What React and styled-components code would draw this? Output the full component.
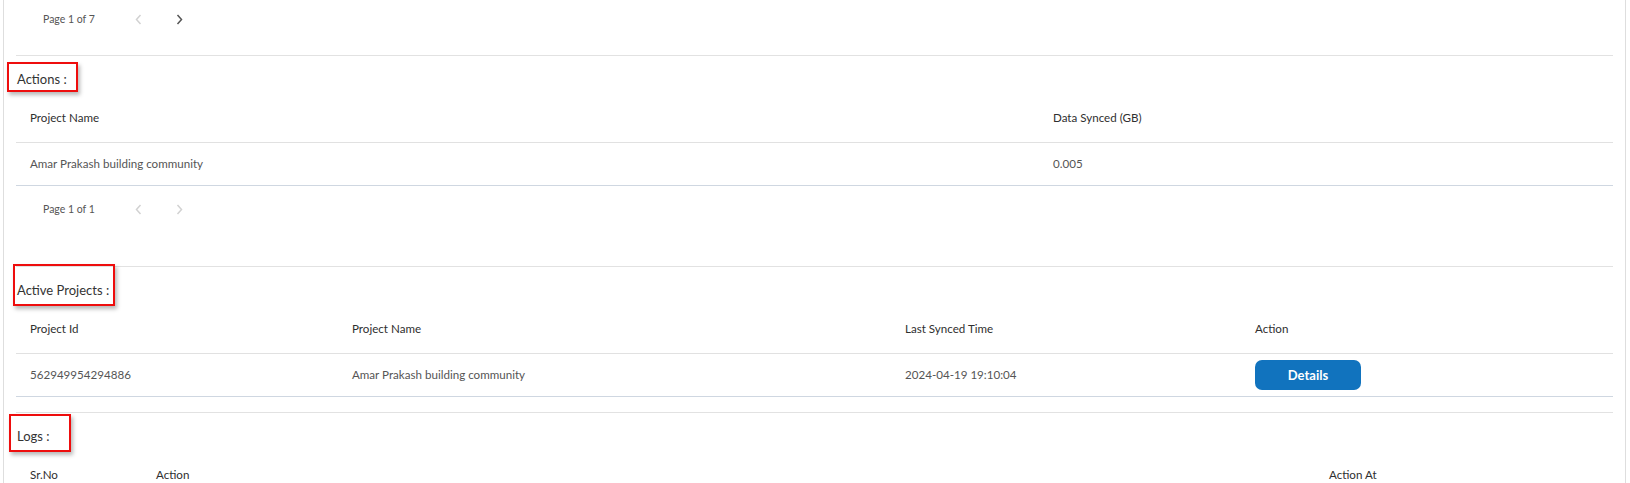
import React from 'react'
import styled, { createGlobalStyle } from 'styled-components'

const GlobalStyle = createGlobalStyle`
  body {
    margin: 0;
    background: #ffffff;
    font-family: Lato, "Liberation Sans", sans-serif;
  }
`

const Page = styled.div`
  width: 1630px;
  height: 483px;
  overflow: hidden;
  background: #fff;
`

const Panel = styled.div`
  margin-left: 3px;
  width: 1597px;
  padding: 0 12px;
  border-left: 1px solid #dedede;
  border-right: 1px solid #dedede;
  min-height: 483px;
`

const Pager = styled.div`
  display: flex;
  align-items: center;
  height: 18px;
  padding: ${p => p.$top}px 0 ${p => p.$bottom}px 27px;
`

const PageText = styled.span`
  width: 85px;
  font-size: 10.5px;
  color: #555;
`

const NavBtn = styled.span`
  width: 20px;
  height: 18px;
  display: flex;
  align-items: center;
  justify-content: center;
  margin-right: 21px;
  color: ${p => (p.$enabled ? '#555' : '#d2d2d2')};
`

const Section = styled.section`
  border-top: 1px solid #e2e2e2;
  padding-bottom: ${p => p.$bottom || 0}px;
`

const Heading = styled.div`
  position: relative;
  padding: 13px 0 7px 1px;
  line-height: 20px;
  font-size: 13px;
  color: #333;
`

const Mark = styled.span`
  position: absolute;
  left: ${p => p.$left}px;
  top: ${p => p.$top}px;
  width: ${p => p.$w}px;
  height: ${p => p.$h}px;
  box-sizing: border-box;
  border: 2px solid #ee0d0d;
  box-shadow: 2px 3px 4px rgba(0, 0, 0, 0.28);
  pointer-events: none;
`

const Row = styled.div`
  display: grid;
  grid-template-columns: ${p => p.$cols};
  align-items: center;
  border-bottom: 1px solid ${p => (p.$head ? '#e1e1e1' : '#cfd7e1')};
`

const HeadCell = styled.div`
  padding: 13px 14px 15px;
  line-height: 18px;
  font-size: 11.6px;
  color: #2f2f2f;
`

const Cell = styled.div`
  padding: ${p => (p.$pad != null ? p.$pad : 12)}px 14px;
  line-height: 18px;
  font-size: 11.6px;
  color: #555;
`

const DetailsButton = styled.button`
  width: 106px;
  height: 30px;
  border: none;
  border-radius: 7px;
  background: #1173be;
  color: #fff;
  font-family: Lato, "Liberation Sans", sans-serif;
  font-size: 13px;
  font-weight: 700;
  cursor: pointer;
`

const Chevron = ({ dir }) => (
  <svg width="7" height="11" viewBox="0 0 7 11" fill="none">
    <polyline
      points={dir === 'left' ? '5.5,1 1.5,5.5 5.5,10' : '1.5,1 5.5,5.5 1.5,10'}
      stroke="currentColor"
      strokeWidth="1.5"
    />
  </svg>
)

const Pagination = ({ page, total, top, bottom }) => (
  <Pager $top={top} $bottom={bottom}>
    <PageText>Page {page} of {total}</PageText>
    <NavBtn $enabled={page > 1}><Chevron dir="left" /></NavBtn>
    <NavBtn $enabled={page < total}><Chevron dir="right" /></NavBtn>
  </Pager>
)

const actionCols = '1023px 1fr'
const activeCols = '322px 553px 350px 1fr'
const logCols = '126px 1173px 1fr'

const App = () => {
  return (
    <>
      <GlobalStyle />
      <Page>
        <Panel>
          <Pagination page={1} total={7} top={10} bottom={27} />

          <Section>
            <Heading>
              Actions :
              <Mark $left={-9} $top={6} $w={71} $h={30} />
            </Heading>
            <Row $head $cols={actionCols}>
              <HeadCell>Project Name</HeadCell>
              <HeadCell>Data Synced (GB)</HeadCell>
            </Row>
            <Row $cols={actionCols}>
              <Cell>Amar Prakash building community</Cell>
              <Cell>0.005</Cell>
            </Row>
            <Pagination page={1} total={1} top={14} bottom={48} />
          </Section>

          <Section $bottom={15}>
            <Heading>
              Active Projects :
              <Mark $left={-3} $top={-3} $w={102} $h={42} />
            </Heading>
            <Row $head $cols={activeCols}>
              <HeadCell>Project Id</HeadCell>
              <HeadCell>Project Name</HeadCell>
              <HeadCell>Last Synced Time</HeadCell>
              <HeadCell>Action</HeadCell>
            </Row>
            <Row $cols={activeCols}>
              <Cell>562949954294886</Cell>
              <Cell>Amar Prakash building community</Cell>
              <Cell>2024-04-19 19:10:04</Cell>
              <Cell $pad={6}>
                <DetailsButton>Details</DetailsButton>
              </Cell>
            </Row>
          </Section>

          <Section>
            <Heading>
              Logs :
              <Mark $left={-7} $top={1} $w={62} $h={38} />
            </Heading>
            <Row $head $cols={logCols}>
              <HeadCell>Sr.No</HeadCell>
              <HeadCell>Action</HeadCell>
              <HeadCell>Action At</HeadCell>
            </Row>
          </Section>
        </Panel>
      </Page>
    </>
  )
}

export default App
